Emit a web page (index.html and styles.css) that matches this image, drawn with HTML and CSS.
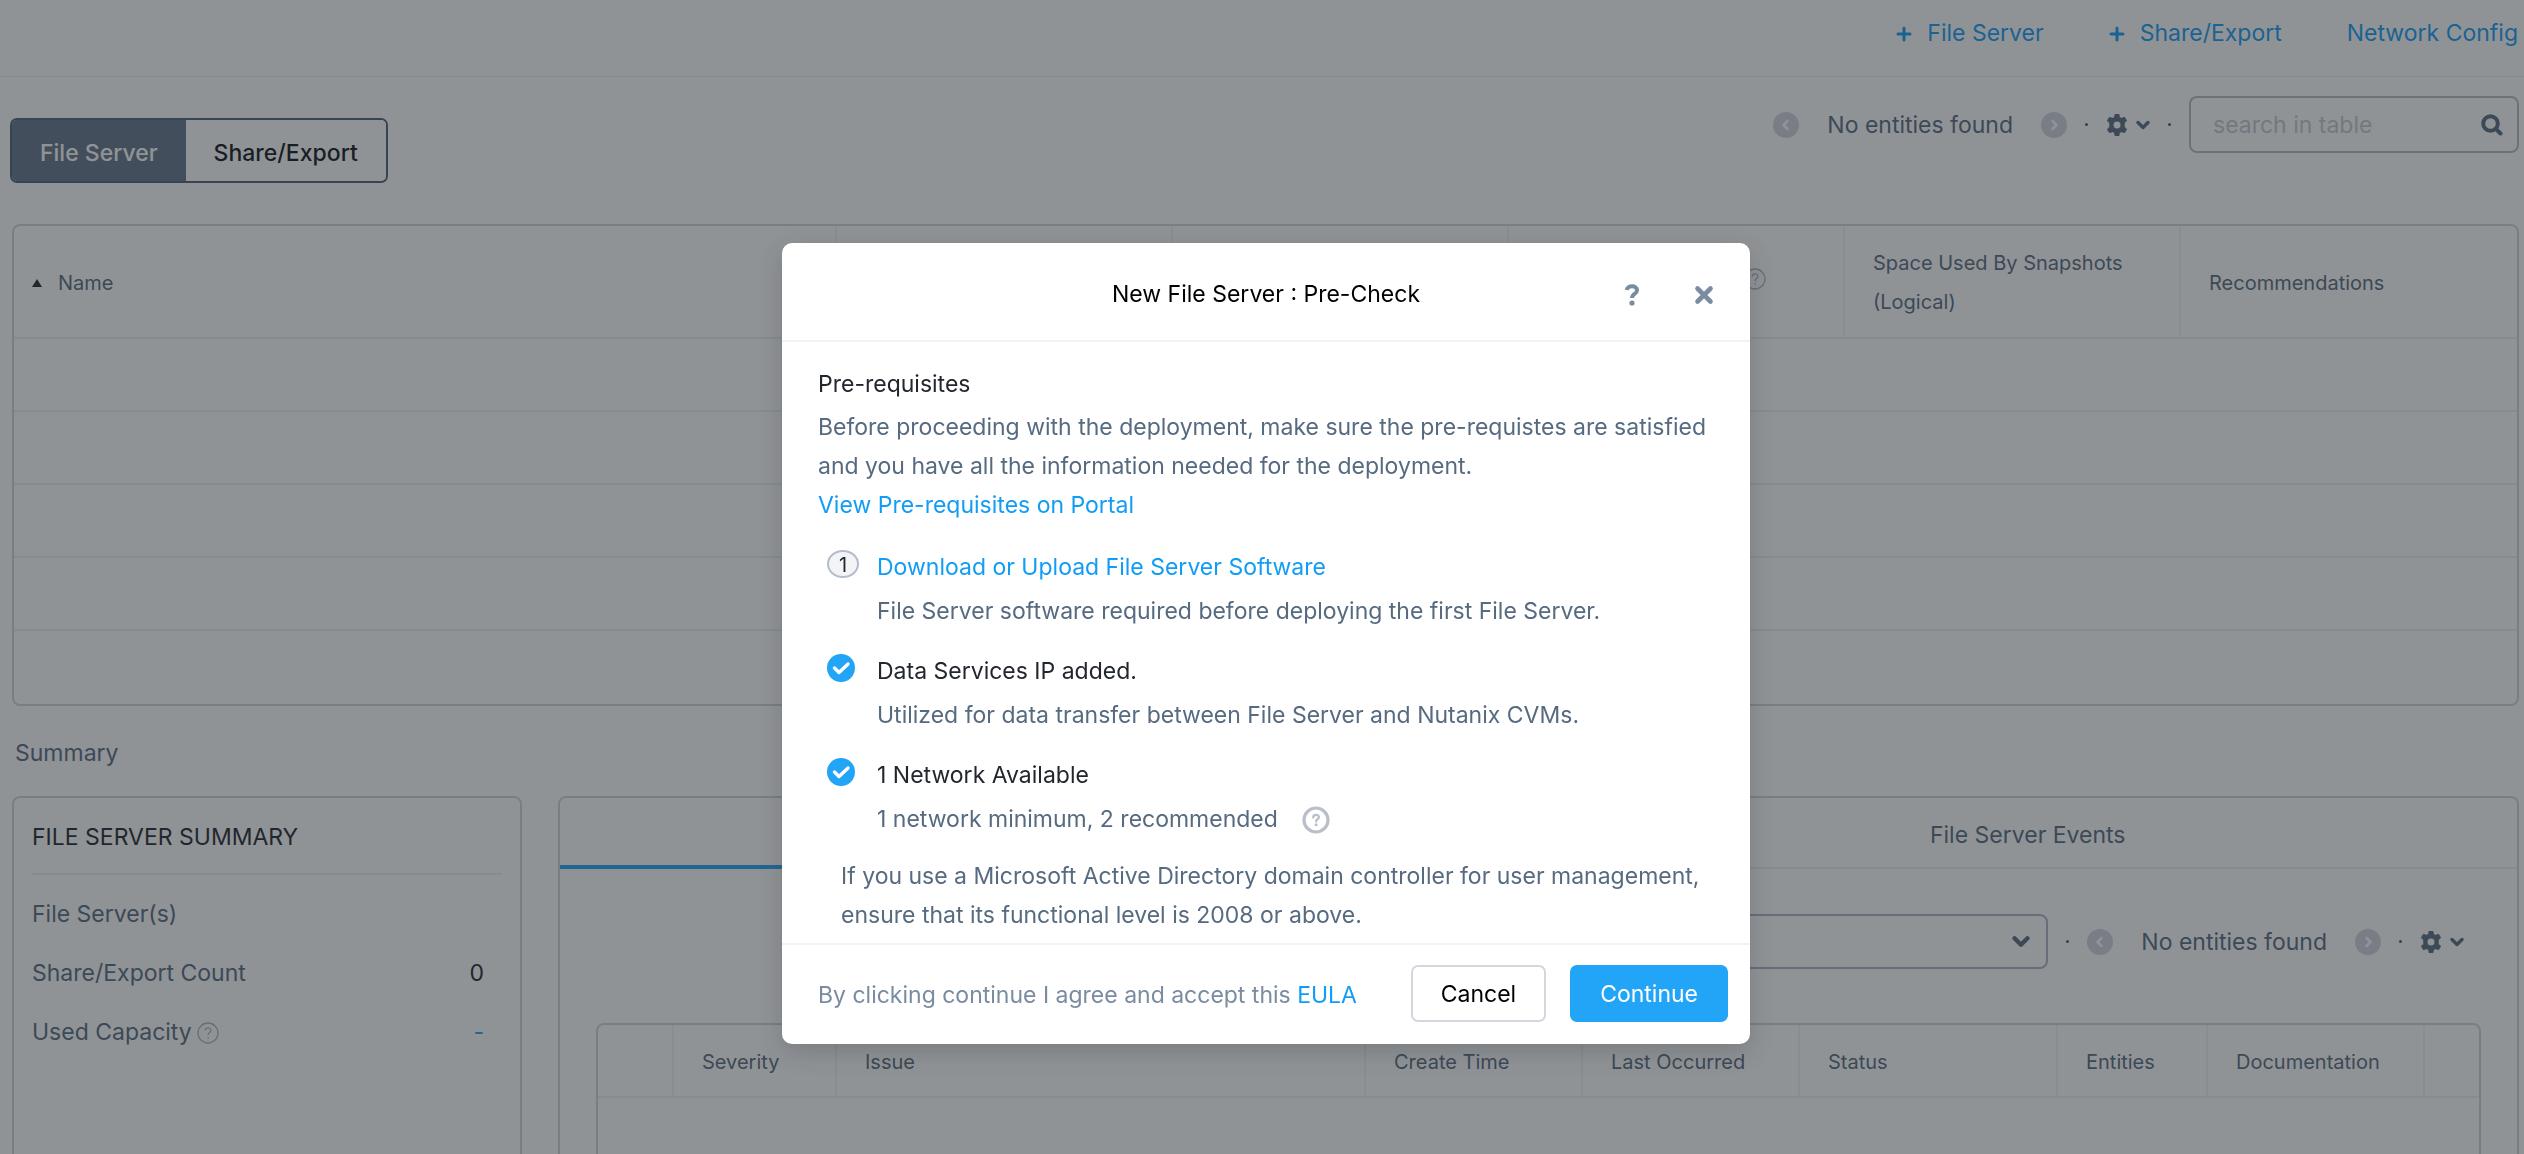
FILE: index.html
```html
<!DOCTYPE html>
<html lang="en">
<head>
<meta charset="utf-8">
<meta name="viewport" content="width=device-width, initial-scale=1">
<title>File Server</title>
<link rel="stylesheet" href="styles.css">
</head>
<body>
<svg class="sprite" aria-hidden="true">
  <symbol id="plus" viewBox="0 0 16 16"><path d="M8 2v12M2 8h12" fill="none" stroke="currentColor" stroke-width="3" stroke-linecap="round"/></symbol>
  <symbol id="prev" viewBox="0 0 26 26"><circle cx="13" cy="13" r="13" fill="currentColor"/><path d="M14.500 9l-4 4 4 4" fill="none" stroke="#fff" stroke-width="2.600" stroke-linecap="round" stroke-linejoin="round"/></symbol>
  <symbol id="next" viewBox="0 0 26 26"><circle cx="13" cy="13" r="13" fill="currentColor"/><path d="M11.500 9l4 4-4 4" fill="none" stroke="#fff" stroke-width="2.600" stroke-linecap="round" stroke-linejoin="round"/></symbol>
  <symbol id="gear" viewBox="0 0 22 22">
    <path fill="currentColor" fill-rule="evenodd" d="M9.200 0h3.600l.7 3.200 1.900 1.100 3.200-1L20.700 6.800l-2.400 2.300v3.800l2.400 2.300-2.100 3.500-3.200-1-1.900 1.100-.7 3.200H9.200l-.7-3.200-1.900-1.100-3.200 1L1.300 15.200l2.400-2.300V9.100L1.300 6.800l2.100-3.500 3.200 1 1.900-1.100zM11 7a4 4 0 1 0 0 8 4 4 0 0 0 0-8z" stroke="currentColor" stroke-width=".8" stroke-linejoin="round"/>
  </symbol>
  <symbol id="chevron" viewBox="0 0 14 10"><path d="M2 2.500l5 5 5-5" fill="none" stroke="currentColor" stroke-width="3.400" stroke-linecap="round" stroke-linejoin="round"/></symbol>
  <symbol id="search" viewBox="0 0 22 22"><circle cx="9.500" cy="9.500" r="7.300" fill="none" stroke="currentColor" stroke-width="4"/><path d="M15 15l4.500 4.500" stroke="currentColor" stroke-width="4" stroke-linecap="round"/></symbol>
  <symbol id="help" viewBox="0 0 22 22"><circle cx="11" cy="11" r="10" fill="none" stroke="currentColor" stroke-width="1.300"/><path d="M8.200 8.800c0-3.900 5.700-3.700 5.700-.4 0 2-2.800 2.300-2.800 4.600M11.100 15v1.500" fill="none" stroke="currentColor" stroke-width="1.300"/></symbol>
  <symbol id="help-bold" viewBox="0 0 28 28"><circle cx="14" cy="14" r="12" fill="none" stroke="currentColor" stroke-width="3.200"/><path d="M11.200 11.600c0-3.800 5.700-3.600 5.700-.3 0 2-2.800 1.800-2.800 4.200" fill="none" stroke="currentColor" stroke-width="2.300" stroke-linecap="round"/><circle cx="14.100" cy="18.700" r="1.500" fill="currentColor"/></symbol>
  <symbol id="question" viewBox="0 0 16 22"><path d="M2.700 6C3.500 1 13 1 13 6.300c0 4-5 3.200-5 7.700" fill="none" stroke="currentColor" stroke-width="4" stroke-linecap="butt" /><circle cx="8" cy="19" r="2.600" fill="currentColor"/></symbol>
  <symbol id="close" viewBox="0 0 20 20"><path d="M3.500 3.500l13 13M16.500 3.500l-13 13" stroke="currentColor" stroke-width="4.600" stroke-linecap="round"/></symbol>
  <symbol id="check" viewBox="0 0 28 28"><circle cx="14" cy="14" r="14" fill="#22a5f7"/><path d="M7.500 14l4.500 4.500 9-8.500" fill="none" stroke="#fff" stroke-width="3.400" stroke-linecap="round" stroke-linejoin="round"/></symbol>
</svg>

<div class="app">
  <header class="topbar">
    <a class="link" href="#"><svg class="i-plus"><use href="#plus"/></svg>File Server</a>
    <a class="link" href="#"><svg class="i-plus"><use href="#plus"/></svg>Share/Export</a>
    <a class="link" href="#">Network Config</a>
  </header>

  <div class="toolbar">
    <div class="toggle">
      <button class="toggle-btn active" type="button">File Server</button>
      <button class="toggle-btn" type="button">Share/Export</button>
    </div>
    <div class="controls">
      <div class="pager">
        <button class="bare muted" type="button" aria-label="Previous page"><svg class="i-page"><use href="#prev"/></svg></button>
        <span>No entities found</span>
        <button class="bare muted" type="button" aria-label="Next page"><svg class="i-page"><use href="#next"/></svg></button>
      </div>
      <span class="dot"></span>
      <button class="bare settings" type="button" aria-label="Settings"><svg class="i-gear"><use href="#gear"/></svg><svg class="i-chevron"><use href="#chevron"/></svg></button>
      <span class="dot"></span>
      <label class="search">
        <input type="text" placeholder="search in table" aria-label="Search in table">
        <svg class="i-search"><use href="#search"/></svg>
      </label>
    </div>
  </div>

  <div class="frame entities">
    <table class="grid">
      <colgroup><col><col class="w-entity"><col class="w-entity"><col class="w-entity"><col class="w-entity"><col class="w-entity"></colgroup>
      <thead>
        <tr>
          <th scope="col"><span class="sorted"><span class="arrow"></span>Name</span></th>
          <th></th>
          <th></th>
          <th><span class="with-help"><svg class="i-help"><use href="#help"/></svg></span></th>
          <th scope="col">Space Used By Snapshots (Logical)</th>
          <th scope="col">Recommendations</th>
        </tr>
      </thead>
      <tbody>
        <tr><td colspan="6"></td></tr>
        <tr><td colspan="6"></td></tr>
        <tr><td colspan="6"></td></tr>
        <tr><td colspan="6"></td></tr>
        <tr><td colspan="6"></td></tr>
      </tbody>
    </table>
  </div>

  <h2 class="section-title">Summary</h2>

  <div class="cards">
    <section class="frame summary">
      <h3 class="summary-title">FILE SERVER SUMMARY</h3>
      <dl class="stats">
        <div class="stat"><dt>File Server(s)</dt><dd></dd></div>
        <div class="stat"><dt>Share/Export Count</dt><dd>0</dd></div>
        <div class="stat"><dt>Used Capacity<svg class="i-help"><use href="#help"/></svg></dt><dd class="blue">-</dd></div>
      </dl>
    </section>

    <section class="frame activity">
      <div class="tabs">
        <button class="tab current" type="button" aria-label="Alerts"></button>
        <button class="tab" type="button">File Server Events</button>
      </div>
      <div class="activity-body">
        <div class="controls activity-controls">
          <div class="picker">
            <select aria-label="Time range"><option></option></select>
            <svg class="i-chevron-lg"><use href="#chevron"/></svg>
          </div>
          <span class="dot"></span>
          <div class="pager">
            <button class="bare muted" type="button" aria-label="Previous page"><svg class="i-page"><use href="#prev"/></svg></button>
            <span>No entities found</span>
            <button class="bare muted" type="button" aria-label="Next page"><svg class="i-page"><use href="#next"/></svg></button>
          </div>
          <span class="dot"></span>
          <button class="bare settings" type="button" aria-label="Settings"><svg class="i-gear"><use href="#gear"/></svg><svg class="i-chevron"><use href="#chevron"/></svg></button>
        </div>
        <div class="frame alerts">
          <table class="grid">
            <colgroup><col class="w-tick"><col class="w-severity"><col><col class="w-time"><col class="w-time"><col class="w-status"><col class="w-count"><col class="w-time"><col class="w-end"></colgroup>
            <thead>
              <tr>
                <th></th>
                <th scope="col">Severity</th>
                <th scope="col">Issue</th>
                <th scope="col">Create Time</th>
                <th scope="col">Last Occurred</th>
                <th scope="col">Status</th>
                <th scope="col">Entities</th>
                <th scope="col">Documentation</th>
                <th></th>
              </tr>
            </thead>
            <tbody><tr><td colspan="9"></td></tr></tbody>
          </table>
        </div>
      </div>
    </section>
  </div>
</div>

<div class="overlay">
  <div class="modal" role="dialog" aria-modal="true" aria-labelledby="modal-title">
    <header class="modal-head">
      <h1 id="modal-title">New File Server : Pre-Check</h1>
      <div class="modal-tools">
        <button class="bare" type="button" aria-label="Help"><svg class="i-question"><use href="#question"/></svg></button>
        <button class="bare" type="button" aria-label="Close"><svg class="i-close"><use href="#close"/></svg></button>
      </div>
    </header>
    <div class="modal-body">
      <h2>Pre-requisites</h2>
      <p>Before proceeding with the deployment, make sure the pre-requistes are satisfied and you have all the information needed for the deployment.</p>
      <a class="link" href="#">View Pre-requisites on Portal</a>
      <ol class="steps">
        <li class="step">
          <span class="badge">1</span>
          <div><a class="link" href="#">Download or Upload File Server Software</a><p>File Server software required before deploying the first File Server.</p></div>
        </li>
        <li class="step">
          <svg class="i-check"><use href="#check"/></svg>
          <div><h3>Data Services IP added.</h3><p>Utilized for data transfer between File Server and Nutanix CVMs.</p></div>
        </li>
        <li class="step">
          <svg class="i-check"><use href="#check"/></svg>
          <div><h3>1 Network Available</h3><p class="hinted">1 network minimum, 2 recommended<svg class="i-help-bold"><use href="#help-bold"/></svg></p></div>
        </li>
      </ol>
      <p class="note">If you use a Microsoft Active Directory domain controller for user management, ensure that its functional level is 2008 or above.</p>
    </div>
    <footer class="modal-foot">
      <p>By clicking continue I agree and accept this <a class="link-inline" href="#">EULA</a></p>
      <div class="actions">
        <button class="btn" type="button">Cancel</button>
        <button class="btn primary" type="button">Continue</button>
      </div>
    </footer>
  </div>
</div>
</body>
</html>
```
FILE: styles.css
```css
* { box-sizing: border-box; }

body {
  margin: 0;
  overflow: hidden;
  background: #fff;
  color: #566a80;
  font: 400 23px/39px Inter, "Liberation Sans", sans-serif;
}

h1, h2, h3, p, dl, dd, ol { margin: 0; padding: 0; font-size: 23px; font-weight: inherit; }
button, input, select { font: inherit; color: inherit; }
button { cursor: pointer; }
svg { display: block; flex: none; }
.sprite { position: absolute; width: 0; height: 0; }

/* Icon sizes */
.i-plus { width: 16px; height: 16px; }
.i-page { width: 26px; height: 26px; }
.i-gear { width: 22px; height: 22px; }
.i-chevron { width: 14px; height: 10px; }
.i-chevron-lg { width: 18px; height: 13px; }
.i-search { width: 22px; height: 22px; }
.i-help { width: 22px; height: 22px; color: #aeb4c4; }
.i-help-bold { width: 28px; height: 28px; color: #b8bfca; }
.i-question { width: 16px; height: 22px; }
.i-close { width: 20px; height: 20px; }
.i-check { width: 28px; height: 28px; }

.link { display: flex; align-items: center; gap: 15px; color: #129df5; text-decoration: none; }
.link-inline { color: #129df5; text-decoration: none; }
.bare { display: flex; align-items: center; justify-content: center; padding: 0; border: 0; background: none; }
.muted { color: #d0d4de; }
.frame { border: 2px solid #d1d5de; border-radius: 8px; }

.app { display: flex; flex-direction: column; height: 100vh; overflow: hidden; }

.topbar {
  display: flex;
  flex: none;
  justify-content: flex-end;
  gap: 65px;
  padding: 14px 6px 23px;
  border-bottom: 1px solid #e9ecf1;
}

/* Toolbar */
.toolbar { display: flex; flex: none; align-items: flex-start; justify-content: space-between; padding: 19px 5px 41px 10px; }
.toggle { display: flex; height: 65px; margin-top: 22px; border: 2px solid #4b6078; border-radius: 7px; overflow: hidden; }
.toggle-btn { padding: 5px 28px 0; border: 0; background: #fff; color: #10141d; font-weight: 500; }
.toggle-btn.active { background: #627588; color: #fff; }

.controls { display: flex; align-items: center; gap: 18px; }
.pager { display: flex; align-items: center; gap: 28px; }
.pager span { padding-top: 2px; }
.dot { width: 3px; height: 3px; border-radius: 50%; background: #4b5a6c; }
.settings { gap: 8px; }
.search {
  display: flex;
  align-items: center;
  width: 330px;
  height: 57px;
  padding: 0 14px 0 22px;
  border: 2px solid #b9bdc4;
  border-radius: 8px;
}
.search input { flex: 1; min-width: 0; padding: 2px 0 0; border: 0; outline: 0; background: none; }
.search input::placeholder { color: #c4c8d0; opacity: 1; }

/* Tables */
.entities, .section-title { flex: none; }
.entities { margin: 0 5px 0 12px; }
.grid { width: 100%; table-layout: fixed; border-collapse: separate; border-spacing: 0; }
.grid th {
  height: 73px;
  padding: 3px 28px 0;
  border-right: 2px solid #f0f2f6;
  border-bottom: 2px solid #eceff3;
  font-size: 20px;
  font-weight: inherit;
  text-align: left;
}
.grid th:last-child { border-right: 0; }
.grid td { height: 73px; padding: 0; border-bottom: 2px solid #eceff3; }
.grid tr:last-child td { border-bottom: 0; }
.entities th { height: 113px; }
.entities th:first-child { padding-left: 18px; }
.w-entity { width: 336px; }
.w-tick { width: 76px; }
.w-severity { width: 163px; }
.w-time { width: 217px; }
.w-status { width: 258px; }
.w-count { width: 150px; }
.w-end { width: 54px; }
.sorted { display: flex; align-items: center; gap: 16px; }
.arrow { border: solid transparent; border-width: 0 5px 8px; border-bottom-color: #22272e; }
.with-help { display: flex; justify-content: flex-end; padding: 0 49px 8px 0; }

.section-title { padding: 28px 15px 23px; }

/* Summary cards */
.cards { display: flex; flex: 1 0 400px; gap: 36px; padding: 0 5px 0 12px; }
.summary { width: 510px; padding: 20px 18px; }
.summary-title { padding-bottom: 16px; border-bottom: 2px solid #eceff3; color: #22272e; }
.stats { display: flex; flex-direction: column; gap: 20px; padding: 20px 18px 0 0; }
.stat { display: flex; justify-content: space-between; }
.stat dt { display: flex; align-items: center; gap: 5px; }
.stat dd { color: #22272e; }
.stat .blue { color: #22a5f7; }

.activity { display: flex; flex: 1; flex-direction: column; min-width: 0; }
.tabs { display: flex; }
.tab { flex: 1; height: 71px; padding: 5px 0 0; border: 0; border-bottom: 2px solid #eceff3; background: none; }
.tab.current { border-bottom: 4px solid #22a5f7; color: #22272e; }
.activity-body { display: flex; flex: 1; flex-direction: column; padding: 45px 36px 0; }
.activity-controls { justify-content: flex-end; padding: 0 17px 54px 0; }
.picker { display: grid; align-items: center; width: 520px; }
.picker select {
  grid-area: 1 / 1;
  height: 55px;
  padding: 0 50px 0 20px;
  border: 2px solid #acb4c8;
  border-radius: 8px;
  background: none;
  appearance: none;
}
.picker svg { grid-area: 1 / 1; justify-self: end; margin-right: 18px; pointer-events: none; }
.alerts { flex: 1; }

/* Dialog */
.overlay {
  position: fixed;
  inset: 0;
  display: flex;
  align-items: flex-start;
  justify-content: center;
  padding: 243px 0 0 8px;
  background: rgba(34, 39, 46, .5);
}
.modal { width: 968px; border-radius: 10px; background: #fff; box-shadow: 0 8px 24px rgba(34, 39, 46, .2); }
.modal-head {
  display: grid;
  grid-template-columns: 1fr auto 1fr;
  align-items: center;
  height: 99px;
  padding: 6px 30px 0;
  border-bottom: 2px solid #f0f2f7;
}
.modal-head h1 { grid-column: 2; color: #000; }
.modal-tools { display: flex; justify-content: flex-end; gap: 40px; color: #7a8ca0; }
.modal-tools .bare { width: 32px; height: 32px; }
.modal-body { padding: 23px 20px 8px 36px; }
.modal-body h2, .modal-body h3 { color: #22272e; }
.modal-body h2 { margin-bottom: 4px; }
.steps { display: flex; flex-direction: column; gap: 21px; padding: 23px 0 18px 9px; list-style: none; }
.step { display: grid; grid-template-columns: 50px 1fr; }
.step > svg { margin-top: 2px; }
.step p { margin-top: 5px; }
.badge {
  width: 32px;
  height: 28px;
  margin-top: 2px;
  border: 2px solid #b4bccb;
  border-radius: 50%;
  background: #f2f4f6;
  color: #22272e;
  font-size: 20px;
  line-height: 26px;
  text-align: center;
}
.hinted { display: flex; align-items: center; gap: 24px; }
.note { padding-left: 23px; }
.modal-foot {
  display: flex;
  align-items: center;
  justify-content: space-between;
  padding: 20px 22px 22px 36px;
  border-top: 2px solid #f0f4f8;
  color: #7a8ca0;
}
.modal-foot p { padding-top: 3px; }
.actions { display: flex; gap: 24px; }
.btn { height: 57px; padding: 2px 28px 0; border: 2px solid #d3d8df; border-radius: 7px; background: #fff; color: #000; }
.btn.primary { border-color: #22a5f7; background: #22a5f7; color: #fff; }
```
